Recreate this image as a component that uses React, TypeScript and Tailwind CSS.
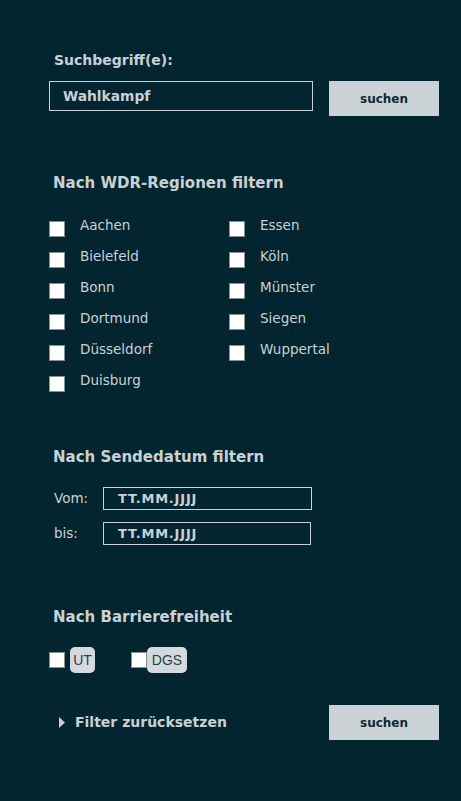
import React from 'react';

const regionsLeft = ['Aachen', 'Bielefeld', 'Bonn', 'Dortmund', 'Düsseldorf', 'Duisburg'];
const regionsRight = ['Essen', 'Köln', 'Münster', 'Siegen', 'Wuppertal'];

const verdana = { fontFamily: '"DejaVu Sans", Verdana, sans-serif' };

function Box() {
  return <span className="block w-[16px] h-[16px] bg-white border border-[#8a8f92] shrink-0" />;
}

function Region({ name }: { name: string }) {
  return (
    <label className="flex items-start h-[31px] cursor-pointer">
      <span className="mt-[4px]">
        <Box />
      </span>
      <span className="ml-[15px] text-[13.5px] leading-[16px] text-[#c9d1d5]">{name}</span>
    </label>
  );
}

function SearchButton() {
  return (
    <button className="w-[110px] h-[35px] bg-[#cbd3d7] text-[#0d2a33] text-[12px] font-bold">
      suchen
    </button>
  );
}

function DateRow({ label, width }: { label: string; width: string }) {
  return (
    <div className="flex items-center">
      <span className="w-[54px] pl-[5px] text-[13.5px] text-[#c9d1d5]">{label}</span>
      <div
        className={`${width} h-[23px] border border-[#c9d1d5] flex items-center pl-[14px] text-[13px] tracking-[0.8px] font-bold text-[#c9d1d5]`}
      >
        TT.MM.JJJJ
      </div>
    </div>
  );
}

export default function App() {
  return (
    <div className="w-[461px] h-[801px] bg-[#03252f] overflow-hidden" style={verdana}>
      <div className="pl-[49px] pt-[52px]">
        {/* suchbegriff */}
        <h2 className="ml-[5px] text-[14px] leading-[17px] font-bold text-[#c9d1d5]">Suchbegriff(e):</h2>
        <div className="mt-[12px] flex items-start gap-[16px]">
          <div className="w-[264px] h-[30px] border border-[#c9d1d5] flex items-center pl-[13px] text-[13.8px] font-bold text-[#c9d1d5]">
            Wahlkampf
          </div>
          <SearchButton />
        </div>

        {/* regionen */}
        <h2 className="mt-[58px] ml-[4px] text-[15px] leading-[18px] font-bold text-[#c9d1d5]">
          Nach WDR-Regionen filtern
        </h2>
        <div className="mt-[25px] grid grid-cols-[180px_180px]">
          <div>
            {regionsLeft.map((r) => (
              <Region key={r} name={r} />
            ))}
          </div>
          <div>
            {regionsRight.map((r) => (
              <Region key={r} name={r} />
            ))}
          </div>
        </div>

        {/* sendedatum */}
        <h2 className="mt-[45px] ml-[4px] text-[15px] leading-[18px] font-bold text-[#c9d1d5]">
          Nach Sendedatum filtern
        </h2>
        <div className="mt-[21px] flex flex-col gap-[12px]">
          <DateRow label="Vom:" width="w-[209px]" />
          <DateRow label="bis:" width="w-[208px]" />
        </div>

        {/* barrierefreiheit */}
        <h2 className="mt-[63px] ml-[4px] text-[15px] leading-[18px] font-bold text-[#c9d1d5]">
          Nach Barrierefreiheit
        </h2>
        <div className="mt-[21px] flex items-center" style={{ fontFamily: '"Liberation Sans", Arial, sans-serif' }}>
          <Box />
          <span className="ml-[5px] w-[25px] h-[26px] rounded-[5px] bg-[#d3d9dc] text-[#2e3f46] text-[14px] flex items-center justify-center">
            UT
          </span>
          <span className="ml-[36px]">
            <Box />
          </span>
          <span className="w-[40px] h-[26px] rounded-[5px] bg-[#d3d9dc] text-[#2e3f46] text-[14px] flex items-center justify-center">
            DGS
          </span>
        </div>

        {/* footer */}
        <div className="mt-[32px] flex items-center">
          <div className="flex items-center w-[280px] pl-[10px] text-[14px] font-bold text-[#c9d1d5]">
            <svg width="6" height="11" viewBox="0 0 6 11" className="mr-[10px]">
              <path d="M0 0 L6 5.5 L0 11 Z" fill="#c9d1d5" />
            </svg>
            Filter zurücksetzen
          </div>
          <SearchButton />
        </div>
      </div>
    </div>
  );
}
